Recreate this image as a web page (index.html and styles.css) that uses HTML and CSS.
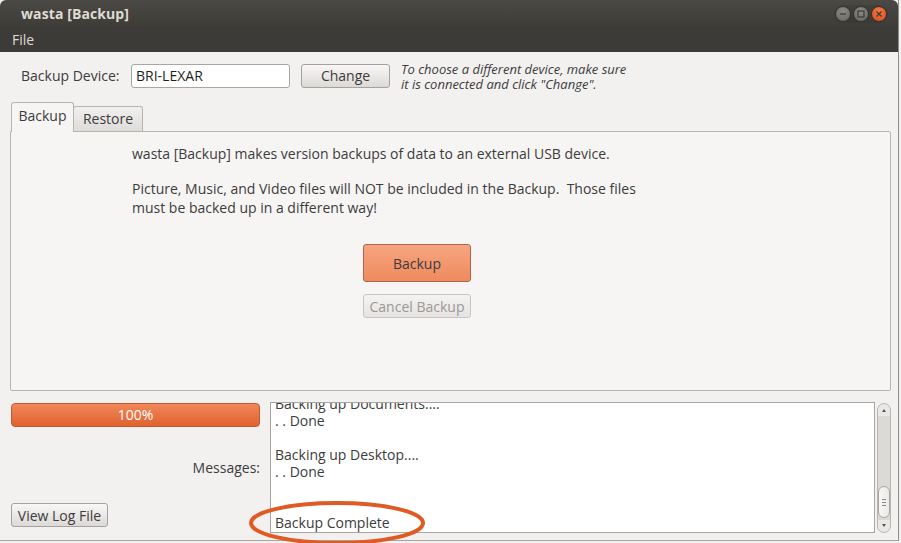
FILE: index.html
```html
<!DOCTYPE html>
<html>
<head>
<meta charset="utf-8">
<link rel="stylesheet" href="styles.css">
</head>
<body>
<div class="window">
  <div class="titlebar">
    <span class="title">wasta [Backup]</span>
    <div class="wbtns">
      <span class="wbtn min"><svg width="14" height="14" viewBox="0 0 14 14"><line x1="4" y1="7" x2="10" y2="7" stroke="#3c3b37" stroke-width="1.3"/></svg></span>
      <span class="wbtn max"><svg width="14" height="14" viewBox="0 0 14 14"><rect x="4" y="4" width="6" height="6" fill="none" stroke="#3c3b37" stroke-width="1.2"/></svg></span>
      <span class="wbtn close"><svg width="14" height="14" viewBox="0 0 14 14"><path d="M4.5 4.5 L9.5 9.5 M9.5 4.5 L4.5 9.5" stroke="#3c3b37" stroke-width="1.3"/></svg></span>
    </div>
  </div>
  <div class="menubar"><span class="menu">File</span></div>

  <div class="content">
    <div class="device-row">
      <span class="label">Backup Device:</span>
      <div class="input">BRI-LEXAR</div>
      <button class="btn change">Change</button>
      <div class="hint"><div>To choose a different device, make sure</div><div>it is connected and click "Change".</div></div>
    </div>

    <div class="tabs">
      <div class="tab active">Backup</div>
      <div class="tab">Restore</div>
    </div>
    <div class="panel">
      <p class="p1">wasta [Backup] makes version backups of data to an external USB device.</p>
      <p class="p2">Picture, Music, and Video files will NOT be included in the Backup.&nbsp; Those files<br>must be backed up in a different way!</p>
      <div class="actions">
        <button class="btn primary">Backup</button>
        <button class="btn disabled">Cancel Backup</button>
      </div>
    </div>

    <div class="bottom">
      <div class="left">
        <div class="progress">100%</div>
        <div class="msg-label">Messages:</div>
        <button class="btn log">View Log File</button>
      </div>
      <div class="messages">
        <div class="msg-text">
          <div>Backing up Documents....</div>
          <div>. . Done</div>
          <div>&nbsp;</div>
          <div>Backing up Desktop....</div>
          <div>. . Done</div>
          <div>&nbsp;</div>
          <div>&nbsp;</div>
          <div>Backup Complete</div>
        </div>
      </div>
      <div class="scrollbar">
        <div class="arrow up"></div>
        <div class="track"><div class="thumb"><span></span><span></span><span></span></div></div>
        <div class="arrow down"></div>
      </div>
    </div>
  </div>
</div>
<svg class="ring" width="190" height="60" viewBox="0 0 190 60">
  <ellipse cx="93" cy="27" rx="86" ry="20" fill="none" stroke="#e05a26" stroke-width="4"/>
</svg>
</body>
</html>
```
FILE: styles.css
```css
* { box-sizing: border-box; }
html, body { margin: 0; padding: 0; }
body {
  width: 901px; height: 543px; overflow: hidden; position: relative;
  background: #f2f1f0;
  font-family: "Open Sans", "Noto Sans", sans-serif;
  font-size: 14px;
  color: #3c3c3c;
}
.window {
  width: 899px; height: 541px;
  border-right: 1px solid #8f8c87;
  border-bottom: 1px solid #a9a6a1;
  background: #f2f1f0;
  display: flex; flex-direction: column;
}
.titlebar {
  height: 27px; background: linear-gradient(#4a4944, #3d3c38);
  display: flex; align-items: center; justify-content: space-between;
  padding: 0 10px 0 21px;
  border-top-left-radius: 6px; border-top-right-radius: 6px;
}
.title { color: #dfdbd2; font-weight: bold; font-size: 14px; letter-spacing: 0.1px; }
.wbtns { display: flex; gap: 2px; background: rgba(0,0,0,0.08); border-radius: 9px; padding: 1px; }
.wbtn {
  width: 16px; height: 16px; border-radius: 50%;
  display: flex; align-items: center; justify-content: center;
  border: 1px solid #35342f;
}
.wbtn svg { width: 14px; height: 14px; }
.wbtn.min, .wbtn.max { background: radial-gradient(circle at 50% 30%, #8d8b86, #66645f); }
.wbtn.close { background: radial-gradient(circle at 50% 30%, #f47a4a, #dd4814); }
.menubar {
  height: 25px; background: #3c3b37;
  display: flex; align-items: center; padding-left: 12px;
}
.menu { color: #dfdbd2; font-size: 14px; }

.content { flex: 1; display: flex; flex-direction: column; padding: 11px 7px 0 10px; }
.device-row { display: flex; align-items: center; height: 25px; }
.label { margin-left: 11px; width: 110px; }
.input {
  width: 159px; height: 24px; background: #fff;
  border: 1px solid #a9a6a1; border-radius: 3px;
  padding: 2px 4px; font-size: 14px; color: #1f1f1f;
  line-height: 18px;
}
.btn {
  font-family: inherit; font-size: 14px; color: #3c3c3c;
  border: 1px solid #a5a29d; border-radius: 3px;
  background: linear-gradient(#f8f7f6, #dcdad7);
  padding: 0; height: 24px;
}
.change { width: 89px; margin-left: 11px; }
.hint {
  margin-left: 11px; font-style: italic; font-size: 13px;
  line-height: 15px; color: #3c3c3c; margin-top: 3px;
}

.tabs { display: flex; margin-top: 14px; align-items: flex-end; height: 29px; }
.tab {
  height: 25px; padding: 0 8px; display: flex; align-items: center;
  border: 1px solid #b8b5b0; border-bottom: none;
  border-radius: 3px 3px 0 0;
  background: linear-gradient(#f1f0ef, #dedcd9);
  margin-left: -1px; width: 70px; justify-content: center;
  padding-bottom: 1px;
}
.tab.active {
  background: #f6f5f4; margin-left: 1px; width: 63px;
  position: relative; z-index: 1; margin-bottom: -1px; height: 30px;
  padding-bottom: 4px;
}
.panel {
  height: 260px; background: #f6f5f4;
  border: 1px solid #b8b5b0; border-radius: 0 2px 2px 2px;
  padding: 12px 0 0 121px;
  width: 881px;
}
.panel p { margin: 0; line-height: 19px; }
.p2 { margin-top: 16px !important; }
.actions {
  display: flex; flex-direction: column; width: 108px;
  margin: 27px 0 0 231px; gap: 12px;
}
.primary {
  height: 38px; font-size: 14px;
  border-color: #b0644a;
  background: linear-gradient(#f6a581, #ef8a5e);
  color: #3c3c3c;
}
.disabled {
  height: 24px; color: #9a9894; border-color: #c8c6c2;
  background: linear-gradient(#f4f3f2, #e6e4e2);
}

.bottom { display: flex; margin-top: 11px; height: 131px; }
.left { width: 250px; display: flex; flex-direction: column; align-items: stretch; padding-left: 1px; }
.progress {
  height: 24px; margin-top: 1px; border-radius: 4px;
  background: linear-gradient(#f2875a, #e0622f);
  border: 1px solid #c05a31;
  color: #fff; text-align: center; line-height: 22px; font-size: 14px;
}
.msg-label { text-align: right; margin-top: 31px; height: 20px; line-height: 20px; }
.log { width: 97px; margin-top: 25px; align-self: flex-start; }
.messages {
  width: 605px; margin-left: 10px; height: 131px; overflow: hidden;
  background: #fff; border: 1px solid #a9a6a1; flex-shrink: 0;
}
.msg-text { margin-top: -8px; padding-left: 4px; line-height: 17px; font-size: 14px; }
.scrollbar {
  width: 14px; margin-left: 2px; margin-top: 1px; height: 130px; flex-shrink: 0;
  display: flex; flex-direction: column;
  border: 1px solid #b8b5b0; border-radius: 7px; background: #ebe9e7;
}
.arrow { height: 12px; position: relative; }
.arrow::after {
  content: ""; position: absolute; left: 4px; width: 0; height: 0;
  border-left: 2.5px solid transparent; border-right: 2.5px solid transparent;
}
.arrow.up::after { top: 5px; border-bottom: 3px solid #555; }
.arrow.down::after { top: 4px; border-top: 3px solid #555; }
.track { flex: 1; background: #dcdad7; display: flex; flex-direction: column; justify-content: flex-end; padding-bottom: 2px; }
.thumb {
  height: 32px; background: linear-gradient(90deg, #f7f6f5, #ecebea);
  border: 1px solid #a9a6a1; border-radius: 6px;
  display: flex; flex-direction: column; align-items: center; justify-content: center; gap: 2px;
}
.thumb span { width: 4px; height: 1px; background: #8a8884; }

.ring { position: absolute; left: 244px; top: 496px; }
```
